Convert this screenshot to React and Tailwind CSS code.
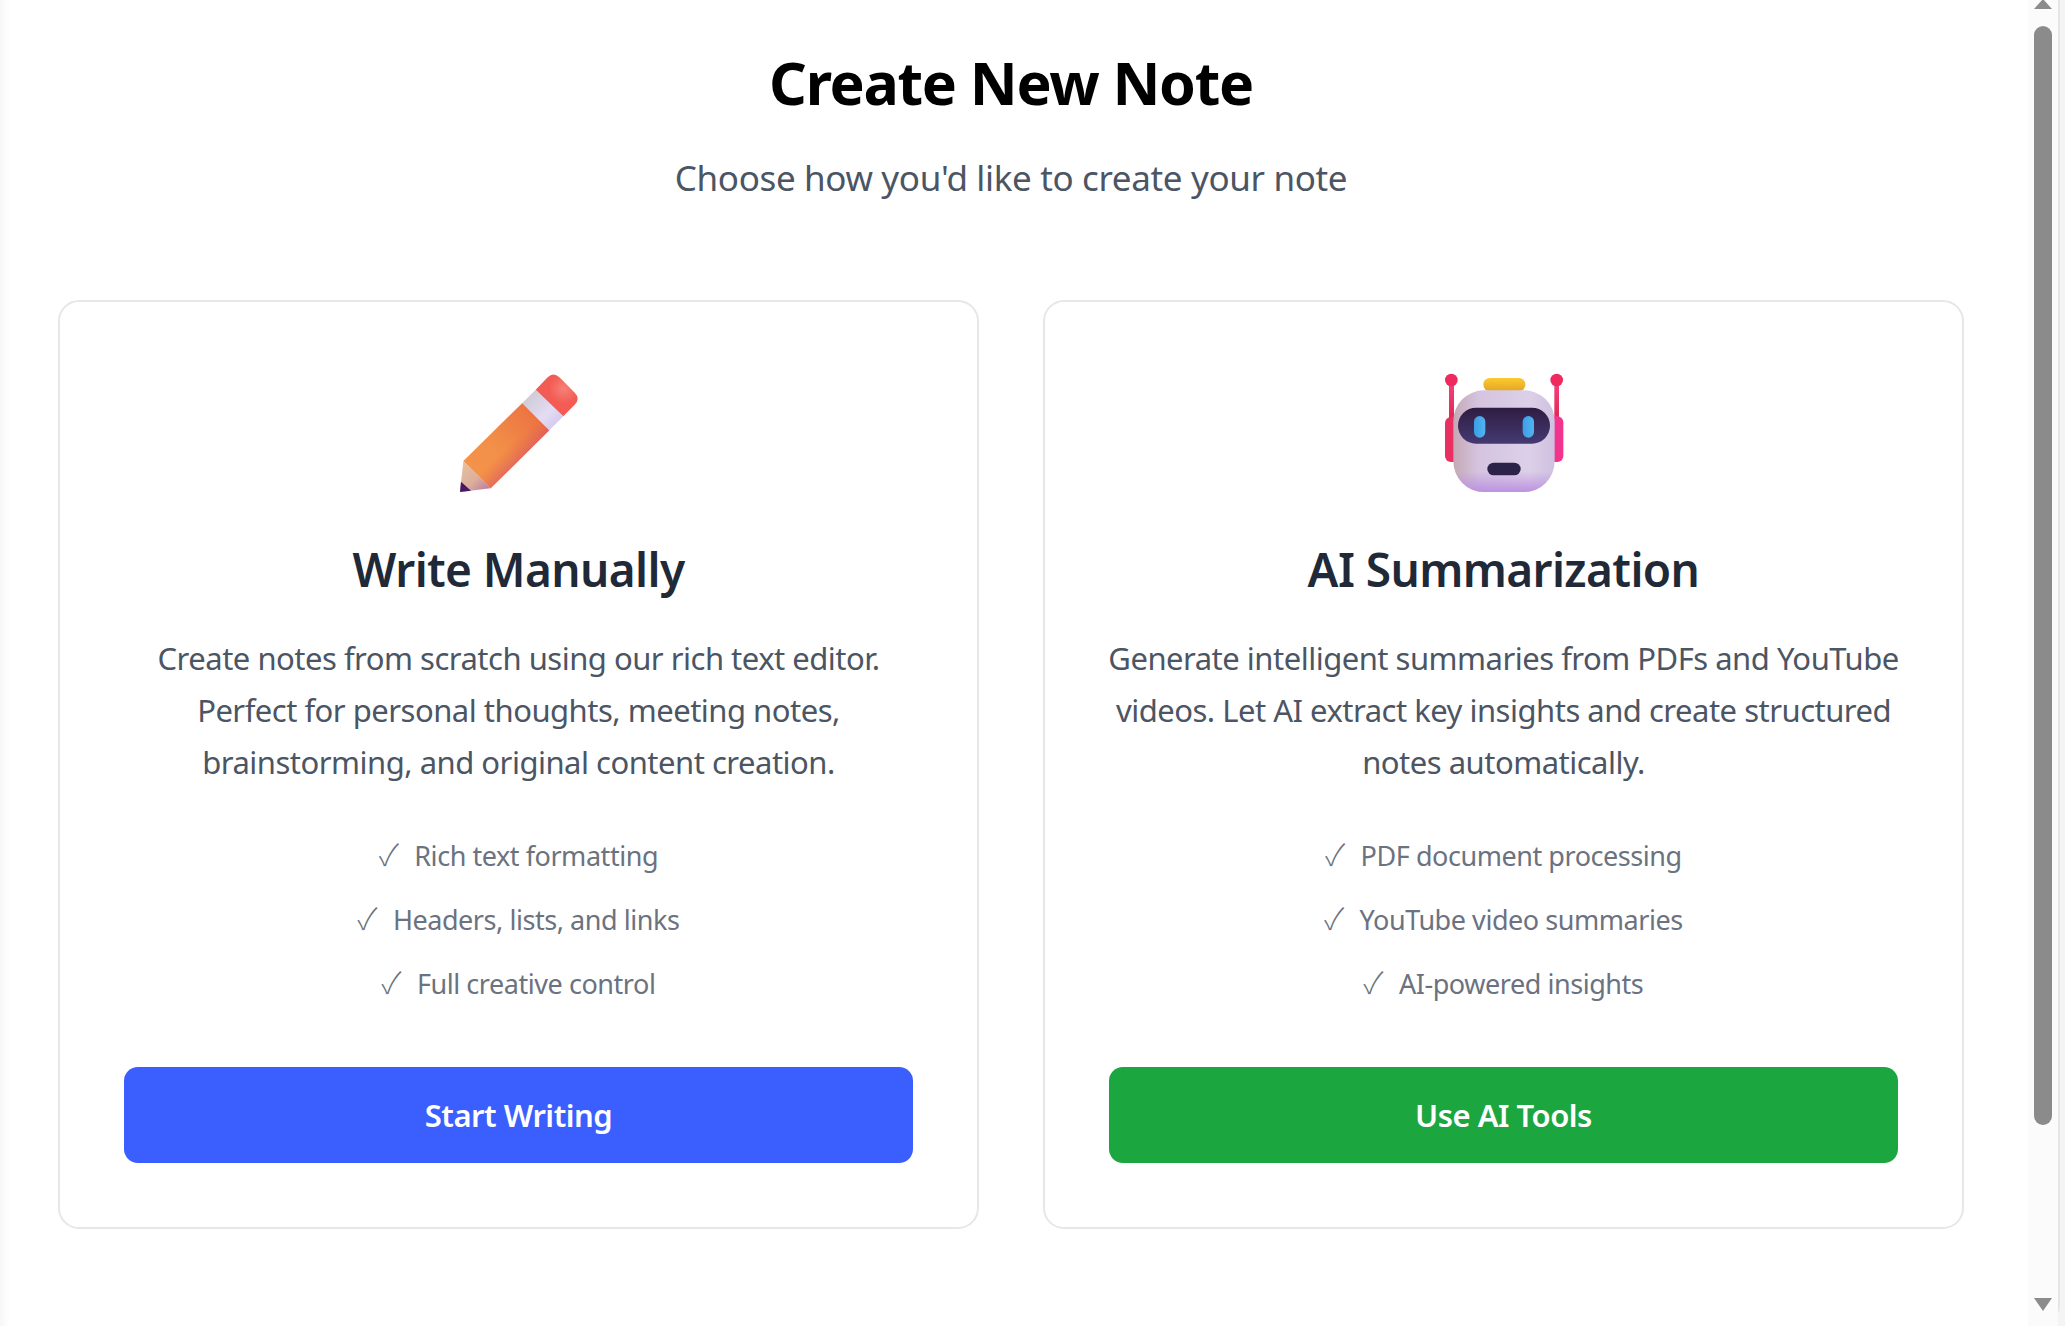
import { Fragment } from 'react';

function PencilIcon() {
  return (
    <svg width="120" height="120" viewBox="115 68 360 360">
      <defs>
        <linearGradient id="pBody" x1="0" y1="1" x2="1" y2="0">
          <stop offset="0" stopColor="#f5954c" />
          <stop offset="0.45" stopColor="#f28e48" />
          <stop offset="1" stopColor="#ea6a40" />
        </linearGradient>
        <linearGradient id="pEdge" gradientUnits="userSpaceOnUse" x1="215" y1="245" x2="296" y2="327">
          <stop offset="0.55" stopColor="#e8663f" stopOpacity="0" />
          <stop offset="1" stopColor="#d9566b" stopOpacity="0.6" />
        </linearGradient>
        <linearGradient id="pBand" x1="0" y1="0" x2="1" y2="1">
          <stop offset="0" stopColor="#c9c5cc" />
          <stop offset="0.6" stopColor="#e4dcf4" />
          <stop offset="1" stopColor="#cbbfe8" />
        </linearGradient>
        <linearGradient id="pWood" x1="0" y1="0" x2="1" y2="1">
          <stop offset="0" stopColor="#e9c49c" />
          <stop offset="0.55" stopColor="#dcae9c" />
          <stop offset="1" stopColor="#b8709c" />
        </linearGradient>
        <radialGradient id="pShine" gradientUnits="userSpaceOnUse" cx="430" cy="115" r="45">
          <stop offset="0" stopColor="#f78a80" stopOpacity="0.8" />
          <stop offset="1" stopColor="#f78a80" stopOpacity="0" />
        </radialGradient>
      </defs>
      <path d="M128 332 L210 414 L118 425 Z" fill="url(#pWood)" />
      <path d="M121 394 L151 421 L118 425 Z" fill="#4a1763" />
      <path d="M128 332 L305 158 L386 240 L210 414 Z" fill="url(#pBody)" />
      <path d="M128 332 L305 158 L386 240 L210 414 Z" fill="url(#pEdge)" />
      <path d="M345 118 L428 198 L386 240 L305 158 Z" fill="url(#pBand)" />
      <path d="M345 118 L381 81 Q398 64 416 81 L462 127 Q480 145 462 163 L428 198 Z" fill="#f35c54" />
      <path d="M345 118 L381 81 Q398 64 416 81 L462 127 Q480 145 462 163 L428 198 Z" fill="url(#pShine)" />
    </svg>
  );
}

function RobotIcon() {
  return (
    <svg width="120" height="120" viewBox="100 68 360 360">
      <defs>
        <linearGradient id="rHead" x1="0" y1="0" x2="1" y2="0">
          <stop offset="0" stopColor="#c4a9b4" />
          <stop offset="0.25" stopColor="#d5c4e0" />
          <stop offset="0.75" stopColor="#dcd0e8" />
          <stop offset="1" stopColor="#cfc0e0" />
        </linearGradient>
        <linearGradient id="rChin" x1="0" y1="0" x2="0" y2="1">
          <stop offset="0.8" stopColor="#bb92e0" stopOpacity="0" />
          <stop offset="1" stopColor="#bb92e0" />
        </linearGradient>
        <linearGradient id="rVisor" x1="0" y1="0" x2="0" y2="1">
          <stop offset="0" stopColor="#2f1c42" />
          <stop offset="1" stopColor="#443a72" />
        </linearGradient>
        <linearGradient id="rEye" x1="0" y1="0" x2="1" y2="0">
          <stop offset="0" stopColor="#3a9fe6" />
          <stop offset="1" stopColor="#52b4f0" />
        </linearGradient>
        <linearGradient id="rCap" x1="0" y1="0" x2="0" y2="1">
          <stop offset="0" stopColor="#fbcb2e" />
          <stop offset="1" stopColor="#e4a627" />
        </linearGradient>
        <linearGradient id="rStem" x1="0" y1="0" x2="0" y2="1">
          <stop offset="0" stopColor="#f5407a" />
          <stop offset="1" stopColor="#dd2450" />
        </linearGradient>
      </defs>
      <rect x="115" y="100" width="15" height="120" fill="url(#rStem)" />
      <rect x="431" y="100" width="14" height="120" fill="url(#rStem)" />
      <circle cx="122" cy="89" r="19" fill="#ee2a5e" />
      <circle cx="438" cy="89" r="19" fill="#ee2a5e" />
      <rect x="103" y="200" width="50" height="135" rx="18" fill="#ea2f62" />
      <rect x="408" y="198" width="50" height="137" rx="18" fill="#f3348e" />
      <rect x="218" y="83" width="126" height="39" rx="19" fill="url(#rCap)" />
      <rect x="128" y="120" width="304" height="305" rx="92" fill="url(#rHead)" />
      <rect x="128" y="120" width="304" height="305" rx="92" fill="url(#rChin)" />
      <rect x="142" y="172" width="276" height="108" rx="54" fill="url(#rVisor)" />
      <rect x="190" y="197" width="34" height="65" rx="17" fill="url(#rEye)" />
      <rect x="336" y="197" width="34" height="65" rx="17" fill="url(#rEye)" />
      <rect x="230" y="337" width="100" height="38" rx="19" fill="#2c2448" />
    </svg>
  );
}

const cards = [
  {
    icon: <PencilIcon />,
    title: 'Write Manually',
    lines: [
      'Create notes from scratch using our rich text editor.',
      'Perfect for personal thoughts, meeting notes,',
      'brainstorming, and original content creation.',
    ],
    features: ['Rich text formatting', 'Headers, lists, and links', 'Full creative control'],
    button: 'Start Writing',
    buttonClass: 'bg-[#3b5eff]',
  },
  {
    icon: <RobotIcon />,
    title: 'AI Summarization',
    lines: [
      'Generate intelligent summaries from PDFs and YouTube',
      'videos. Let AI extract key insights and create structured',
      'notes automatically.',
    ],
    features: ['PDF document processing', 'YouTube video summaries', 'AI-powered insights'],
    button: 'Use AI Tools',
    buttonClass: 'bg-[#1ca63f]',
  },
];

function Card({ card }) {
  return (
    <div className="flex-1 basis-0 min-w-0 h-[929px] rounded-[21px] border-2 border-[#e5e7eb] bg-white px-[64px] pt-[71px] flex flex-col items-center">
      {card.icon}
      <h2 className="mt-[44px] text-[46px] leading-[64px] font-semibold tracking-[-0.6px] text-[#1f2937]">{card.title}</h2>
      <p className="mt-[31px] text-[31px] leading-[52px] tracking-[-0.5px] text-[#4b5563] text-center whitespace-nowrap">
        {card.lines.map((line) => (
          <Fragment key={line}>
            {line}
            <br />
          </Fragment>
        ))}
      </p>
      <ul className="mt-[45px] flex flex-col items-center gap-[19px]">
        {card.features.map((f) => (
          <li key={f} className="text-[27px] leading-[45px] tracking-[-0.45px] text-[#6b7280]">
            <span className="mr-[16px] text-[30px] leading-none font-['Noto_Sans_CJK_SC','DejaVu_Sans',sans-serif] font-light">✓</span>
            {f}
          </li>
        ))}
      </ul>
      <button className={`mt-[61px] w-full h-[96px] rounded-[14px] text-white text-[31px] font-semibold tracking-[-0.5px] ${card.buttonClass}`}>
        {card.button}
      </button>
    </div>
  );
}

export default function App() {
  return (
    <div className="h-[1326px] w-[2065px] overflow-hidden flex bg-[#f4f4f5] font-['Noto_Sans',sans-serif]">
      <div className="flex-1 flex bg-white rounded-br-[21px] border-r-2 border-[#e5e5e7]">
        <main className="flex-1 min-w-0 bg-gradient-to-r from-[#f7f7f7] to-white to-[10px] pl-[58px] pr-[64px]">
          <h1 className="mt-[42px] text-center text-[59px] leading-[80px] font-bold tracking-[-1.3px] text-black">Create New Note</h1>
          <p className="mt-[33px] text-center text-[35px] leading-[46px] tracking-[-0.35px] text-[#4b5563]">
            Choose how you'd like to create your note
          </p>
          <div className="mt-[99px] flex gap-[64px]">
            {cards.map((c) => (
              <Card key={c.title} card={c} />
            ))}
          </div>
        </main>
        <aside className="w-[30px] bg-[#fbfbfb] flex flex-col items-center">
          <div className="w-0 h-0 mt-[-1px] border-x-[9px] border-x-transparent border-b-[10px] border-b-[#8b8b8b]" />
          <div className="mt-[17px] w-[18px] h-[1099px] rounded-[9px] bg-[#8b8b8b]" />
          <div className="mt-[173px] w-0 h-0 border-x-[9px] border-x-transparent border-t-[13px] border-t-[#8b8b8b]" />
        </aside>
      </div>
      <div className="w-[5px]" />
    </div>
  );
}
